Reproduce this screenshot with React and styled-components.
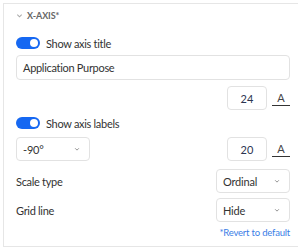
import styled, { createGlobalStyle } from "styled-components";

const GlobalStyle = createGlobalStyle`
  body {
    margin: 0;
    background: #fff;
    font-family: Lato, "Noto Sans", sans-serif;
    color: #333;
  }
`

// STYLED COMPONENTS
const Panel = styled.div`
  margin: 3px 0 0 3px;
  border-top: 1px solid #e6e6e6;
  border-left: 1px solid #e6e6e6;
  border-bottom: 1px solid #e6e6e6;
  padding: 5px 8px 0 12px;
  height: 244px;
  box-sizing: border-box;
  display: flex;
  flex-direction: column;
  & > * {
    flex-shrink: 0;
  }
`

const Header = styled.div`
  display: flex;
  align-items: center;
  gap: 4px;
  height: 12px;
`

const HeaderTitle = styled.span`
  font-size: 9px;
  font-weight: 700;
  color: #666;
  letter-spacing: -0.1px;
`

const ToggleRow = styled.div`
  display: flex;
  align-items: center;
  gap: 6px;
  height: 14px;
  margin-top: ${(p) => p.$top}px;
`

const Track = styled.div`
  width: 24px;
  height: 12px;
  border-radius: 6px;
  background: #1668f2;
  position: relative;
  flex-shrink: 0;
`

const Knob = styled.div`
  position: absolute;
  right: 2px;
  top: 2px;
  width: 8px;
  height: 8px;
  border-radius: 50%;
  background: #fff;
`

const Label = styled.span`
  font-size: 11px;
  letter-spacing: -0.3px;
  color: #333;
`

const TextField = styled.div`
  margin-top: 5px;
  height: 25px;
  border: 1px solid #e2e2e2;
  border-radius: 4px;
  box-sizing: border-box;
  display: flex;
  align-items: center;
  padding: 0 6px;
  font-size: 11px;
  letter-spacing: -0.3px;
  color: #333;
`

const Row = styled.div`
  display: flex;
  align-items: center;
  justify-content: ${(p) => p.$justify || "space-between"};
  margin-top: ${(p) => p.$top}px;
  height: 24px;
`

const SizeGroup = styled.div`
  display: flex;
  align-items: center;
  gap: 5px;
`

const NumberBox = styled.div`
  width: 40px;
  height: 24px;
  border: 1px solid #e2e2e2;
  border-radius: 4px;
  box-sizing: border-box;
  display: flex;
  align-items: center;
  justify-content: center;
  font-size: 11px;
  color: #2c3550;
`

const FontIcon = styled.div`
  width: 18px;
  height: 16px;
  display: flex;
  flex-direction: column;
  align-items: center;
  justify-content: flex-end;
  font-size: 11px;
  color: #444;
  line-height: 1;
  &::after {
    content: "";
    display: block;
    width: 18px;
    height: 1px;
    background: #333;
    margin-top: 2px;
  }
`

const SelectBox = styled.div`
  width: ${(p) => p.$width}px;
  height: 24px;
  border: 1px solid #e2e2e2;
  border-radius: 4px;
  box-sizing: border-box;
  display: flex;
  align-items: center;
  justify-content: space-between;
  padding: 0 9px 0 6px;
  font-size: 11px;
  letter-spacing: -0.2px;
  color: #333;
`

const Revert = styled.div`
  margin-top: 5px;
  height: 12px;
  line-height: 12px;
  text-align: right;
  font-size: 9.5px;
  letter-spacing: -0.2px;
  color: #3a7ee6;
`

const Chevron = ({ size = 6, color = "#888" }) => (
  <svg width={size} height={size} viewBox="0 0 8 8">
    <path d="M1.5 3 L4 5.5 L6.5 3" fill="none" stroke={color} strokeWidth="1.2" />
  </svg>
)

const Toggle = () => (
  <Track>
    <Knob />
  </Track>
)

export default function App() {
  return (
    <>
      <GlobalStyle />
      <Panel>
        <Header>
          <Chevron size={7} color="#aaa" />
          <HeaderTitle>X-AXIS*</HeaderTitle>
        </Header>
        <ToggleRow $top={15}>
          <Toggle />
          <Label>Show axis title</Label>
        </ToggleRow>
        <TextField>Application Purpose</TextField>
        <Row $top={6} $justify="flex-end">
          <SizeGroup>
            <NumberBox>24</NumberBox>
            <FontIcon>A</FontIcon>
          </SizeGroup>
        </Row>
        <ToggleRow $top={6}>
          <Toggle />
          <Label>Show axis labels</Label>
        </ToggleRow>
        <Row $top={7}>
          <SelectBox $width={74}>
            -90°
            <Chevron />
          </SelectBox>
          <SizeGroup>
            <NumberBox>20</NumberBox>
            <FontIcon>A</FontIcon>
          </SizeGroup>
        </Row>
        <Row $top={8}>
          <Label>Scale type</Label>
          <SelectBox $width={74}>
            Ordinal
            <Chevron />
          </SelectBox>
        </Row>
        <Row $top={5}>
          <Label>Grid line</Label>
          <SelectBox $width={74}>
            Hide
            <Chevron />
          </SelectBox>
        </Row>
        <Revert>*Revert to default</Revert>
      </Panel>
    </>
  )
}
